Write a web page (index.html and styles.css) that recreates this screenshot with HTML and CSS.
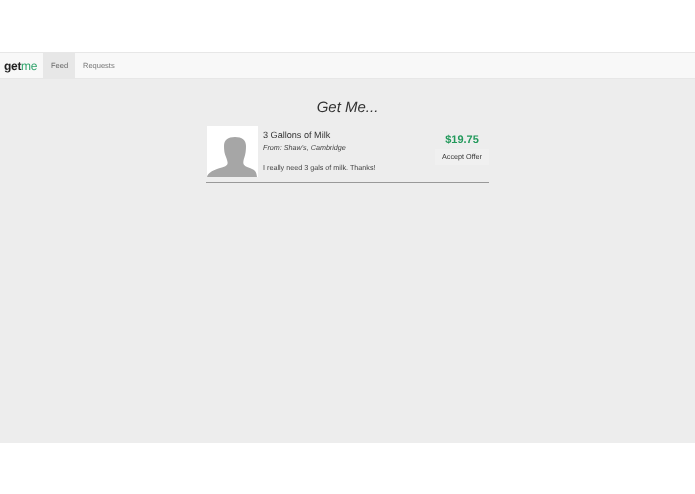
FILE: index.html
```html
<!DOCTYPE html>
<html lang="en">
<head>
<meta charset="UTF-8">
<title>getme</title>
<link rel="stylesheet" href="styles.css">
</head>
<body>
<div class="app">
    <nav class="navbar">
        <a class="brand" href="#">get<span class="brand-me">me</span></a>
        <a class="nav-link active" href="#">Feed</a>
        <a class="nav-link" href="#">Requests</a>
    </nav>
    <div class="content">
        <h1 class="title">Get Me...</h1>
        <div class="request">
            <svg class="avatar" viewBox="0 0 51 51" width="51" height="51">
                <rect width="51" height="51" fill="#fff"/>
                <path d="M0 51 C1 47 5 45 10 43 C16 41 19.500 40.500 20.500 38 C21 36 20 34 19 31 C17.500 28 17 24 17 20 C17 14 21 11 28 11 C35 11 39 14 39 20 C39 24 38.500 28 37.500 31 C36.500 34 36 36 36.500 38 C37.500 40.500 41 41 45 43 C48 44 49.500 46 50 51 Z" fill="#a6a6a6"/>
            </svg>
            <div class="details">
                <div class="item">3 Gallons of Milk</div>
                <div class="store">From: Shaw's, Cambridge</div>
                <div class="note">I really need 3 gals of milk. Thanks!</div>
            </div>
            <div class="offer">
                <div class="price">$19.75</div>
                <a class="accept" href="#">Accept Offer</a>
            </div>
        </div>
    </div>
</div>
</body>
</html>
```
FILE: styles.css
```css
body {
    margin: 0;
    background-color: #fff;
    font-family: "Liberation Sans", Arial, sans-serif;
    text-rendering: geometricPrecision;
}
a {
    text-decoration: none;
}
.app {
    margin-top: 52px;
    height: 391px;
    display: flex;
    flex-direction: column;
    background-color: #ededed;
}
.navbar {
    display: flex;
    height: 25px;
    background-color: #f8f8f8;
    border-top: 1px solid #e7e7e7;
    border-bottom: 1px solid #e7e7e7;
}
.brand {
    width: 43px;
    box-sizing: border-box;
    padding-left: 4px;
    font-size: 12px;
    font-weight: bold;
    line-height: 27px;
    letter-spacing: -0.3px;
    color: #222;
    will-change: transform;
}
.brand-me {
    font-weight: normal;
    color: #2fa36b;
}
.nav-link {
    padding: 0 8px;
    font-size: 7.500px;
    line-height: 25px;
    color: #777;
    will-change: transform;
}
.nav-link.active {
    width: 16px;
    color: #666;
    background-color: #e7e7e7;
}
.content {
    width: 283px;
    margin: 0 auto;
    will-change: transform;
}
.title {
    margin: 19px 0 8px;
    font-size: 15px;
    font-weight: normal;
    font-style: italic;
    line-height: 20px;
    text-align: center;
    color: #333;
}
.request {
    display: flex;
    height: 56px;
    border-bottom: 1px solid #999;
}
.avatar {
    display: block;
    margin-left: 1px;
    flex-shrink: 0;
}
.details {
    flex: 1;
    padding-left: 5px;
    color: #333;
}
.item {
    margin-top: 3px;
    font-size: 9.100px;
    line-height: 12px;
}
.store {
    margin-top: 1px;
    font-size: 7.200px;
    font-style: italic;
    line-height: 11px;
    color: #444;
}
.note {
    margin-top: 9px;
    font-size: 7.200px;
    line-height: 11px;
    color: #444;
}
.offer {
    width: 54px;
    text-align: center;
}
.price {
    margin-top: 7px;
    font-size: 11px;
    font-weight: bold;
    line-height: 14px;
    color: #22995b;
}
.accept {
    display: block;
    margin-top: 2px;
    font-size: 7.200px;
    line-height: 16px;
    color: #333;
    background-color: #f0f0f0;
}
```
